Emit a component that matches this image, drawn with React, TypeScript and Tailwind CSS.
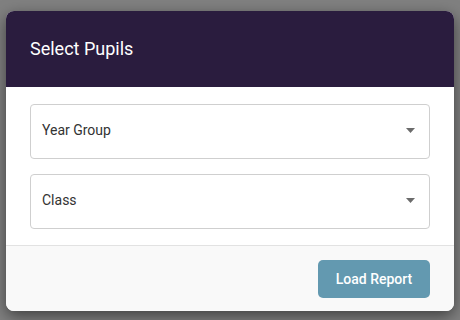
import React from "react";

function Caret() {
  return (
    <svg width="9" height="5" viewBox="0 0 9 5" className="shrink-0">
      <path d="M0 0 L9 0 L4.5 5 Z" fill="#6b6b6b" />
    </svg>
  );
}

function SelectBox({ label }: { label: string }) {
  return (
    <div className="h-[55px] rounded-[4px] border border-[#cfcfcf] bg-white flex items-center pl-[11px] pr-[14px] pb-[3px]">
      <span className="flex-1 text-[14px] text-[#333333]">{label}</span>
      <Caret />
    </div>
  );
}

export default function App() {
  return (
    <div
      className="w-[460px] h-[320px] bg-[#808080] overflow-hidden pt-[11px] pl-[6px]"
      style={{ fontFamily: "Roboto, 'Liberation Sans', sans-serif" }}
    >
      <div className="w-[448px] h-[300px] rounded-[8px] overflow-hidden bg-white shadow-[0_5px_15px_rgba(0,0,0,0.5)] flex flex-col">
        <div className="h-[76px] bg-[#2a1c3e] flex items-center pl-[24px] pb-[1px]">
          <span className="text-[18px] text-white">Select Pupils</span>
        </div>
        <div className="h-[158px] bg-white flex flex-col gap-[15px] pl-[24px] pr-[24px] pt-[17px]">
          <SelectBox label="Year Group" />
          <SelectBox label="Class" />
        </div>
        <div className="flex-1 border-t border-[#e2e2e2] bg-[#f9f9f9] flex items-start justify-end pr-[24px] pt-[14px]">
          <button className="w-[112px] h-[38px] rounded-[5px] bg-[#6399b0] text-white text-[14px] font-medium">
            Load Report
          </button>
        </div>
      </div>
    </div>
  );
}
